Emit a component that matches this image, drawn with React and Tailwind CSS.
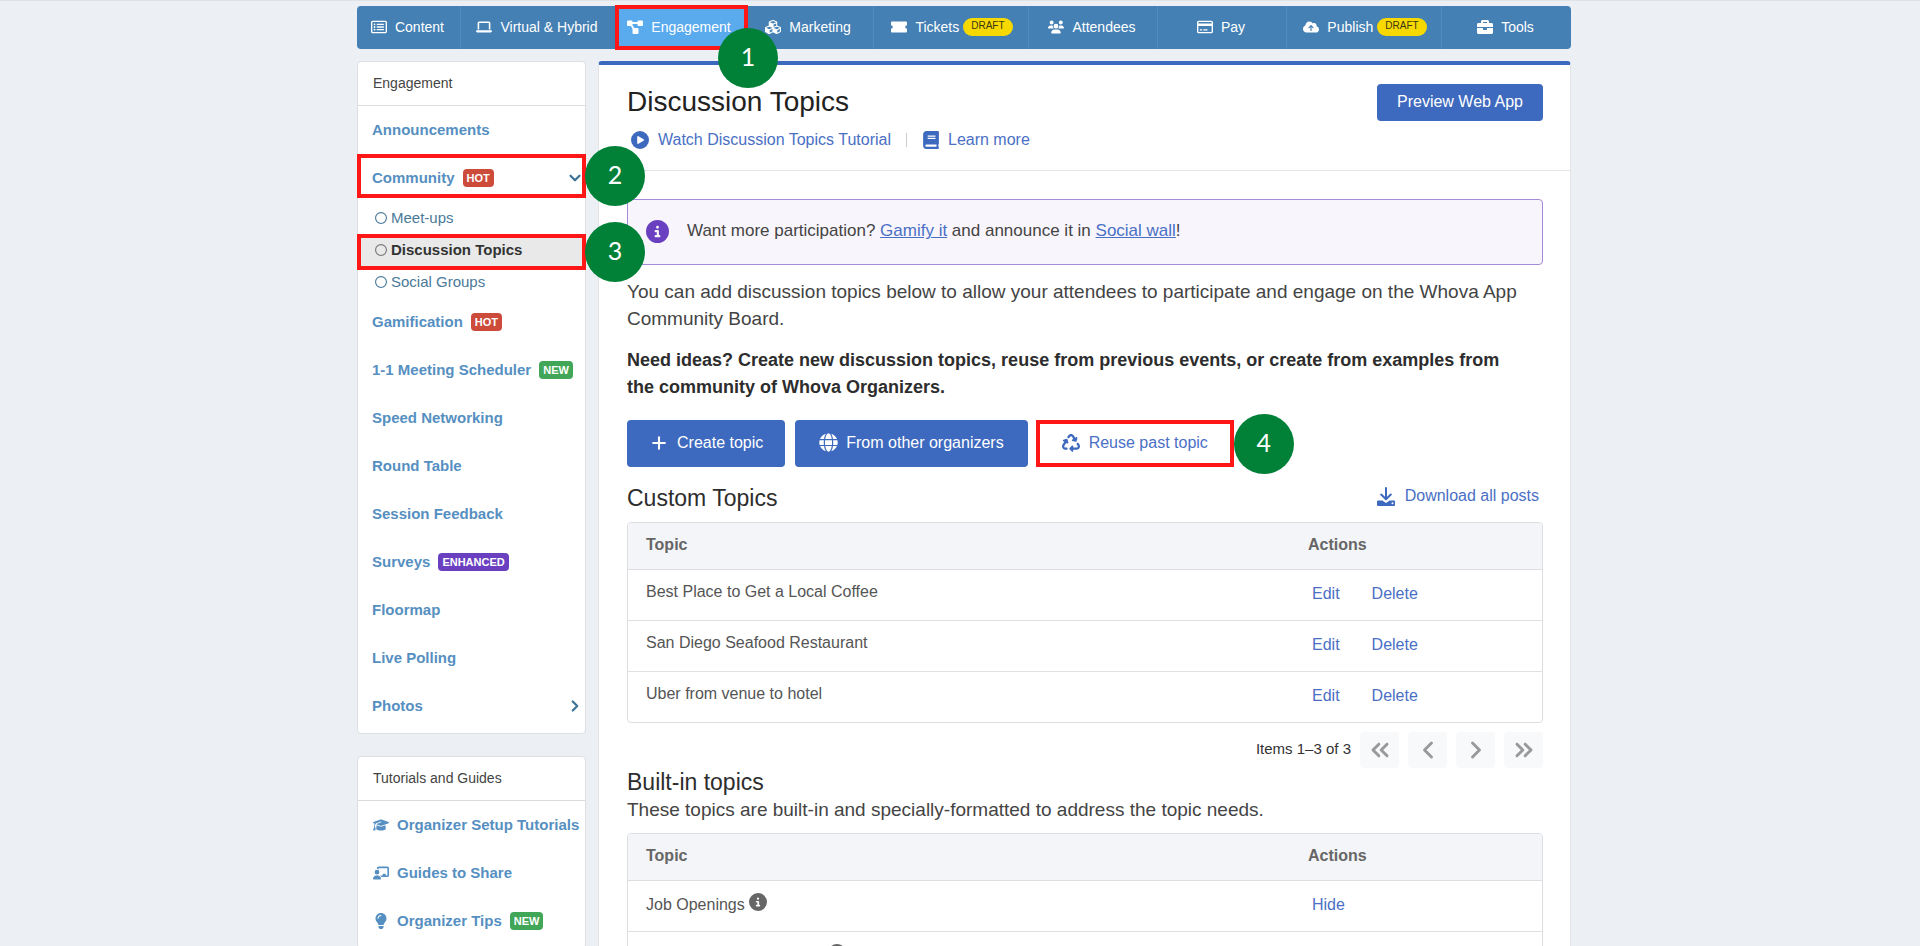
import React, { useState } from 'react';
import { ChevronDown, ChevronLeft, ChevronRight, ChevronsLeft, ChevronsRight, Plus } from 'lucide-react';
import { FaCubes, FaLightbulb, FaGlobe, FaBriefcase, FaBook } from 'react-icons/fa';
import {
  FaRegRectangleList,
  FaLaptop,
  FaUsers,
  FaRegCreditCard,
  FaCloudArrowUp,
  FaCirclePlay,
  FaCircleInfo,
  FaRecycle,
  FaGraduationCap,
  FaChalkboardUser,
  FaRegCircle,
} from 'react-icons/fa6';

const DiagramIcon = ({ className }) => (
  <svg viewBox="0 0 16 16" className={className} fill="currentColor" aria-hidden="true">
    <rect x="0" y="1.500" width="5.500" height="5.500" rx="1" />
    <rect x="10.500" y="1.500" width="5.500" height="5.500" rx="1" />
    <rect x="5.500" y="9" width="6" height="6" rx="1" />
    <path d="M4 4h8M3.500 5l4 6" fill="none" stroke="currentColor" strokeWidth="1.800" />
  </svg>
);

const TicketIcon = ({ className }) => (
  <svg viewBox="0 0 16 12" className={className} fill="currentColor" aria-hidden="true">
    <path d="M1 0.500h14a1 1 0 0 1 1 1v2.700a1.800 1.800 0 0 0 0 3.600v2.700a1 1 0 0 1-1 1H1a1 1 0 0 1-1-1V7.800a1.800 1.800 0 0 0 0-3.600V1.500a1 1 0 0 1 1-1z" />
  </svg>
);

const DownloadIcon = ({ className }) => (
  <svg viewBox="0 0 18 19" className={className} aria-hidden="true">
    <path d="M9 1v11M4.200 7.500L9 12.300l4.800-4.800" fill="none" stroke="currentColor" strokeWidth="2" strokeLinecap="round" strokeLinejoin="round" />
    <path d="M1 13.500h4.300L9 16l3.700-2.500H17a1 1 0 0 1 1 1V18a1 1 0 0 1-1 1H1a1 1 0 0 1-1-1v-3.500a1 1 0 0 1 1-1zm14.500 1.800a1 1 0 1 0 0 2 1 1 0 0 0 0-2z" fill="currentColor" fillRule="evenodd" />
  </svg>
);

const navItems = [
  { name: 'Content', icon: FaRegRectangleList },
  { name: 'Virtual & Hybrid', icon: FaLaptop },
  { name: 'Engagement', icon: DiagramIcon, step: 1 },
  { name: 'Marketing', icon: FaCubes },
  { name: 'Tickets', icon: TicketIcon, draft: true },
  { name: 'Attendees', icon: FaUsers },
  { name: 'Pay', icon: FaRegCreditCard },
  { name: 'Publish', icon: FaCloudArrowUp, draft: true },
  { name: 'Tools', icon: FaBriefcase },
];

const menuItems = [
  { name: 'Announcements' },
  {
    name: 'Community',
    badge: 'HOT',
    step: 2,
    children: ['Meet-ups', 'Discussion Topics', 'Social Groups'],
  },
  { name: 'Gamification', badge: 'HOT' },
  { name: '1-1 Meeting Scheduler', badge: 'NEW' },
  { name: 'Speed Networking' },
  { name: 'Round Table' },
  { name: 'Session Feedback' },
  { name: 'Surveys', badge: 'ENHANCED' },
  { name: 'Floormap' },
  { name: 'Live Polling' },
  { name: 'Photos', more: true },
];

const guideItems = [
  { name: 'Organizer Setup Tutorials', icon: FaGraduationCap },
  { name: 'Guides to Share', icon: FaChalkboardUser },
  { name: 'Organizer Tips', icon: FaLightbulb, badge: 'NEW' },
];

const customTopics = ['Best Place to Get a Local Coffee', 'San Diego Seafood Restaurant', 'Uber from venue to hotel'];

// the second built-in topic has no name yet, its row only holds the info icon
const builtInTopics = ['Job Openings', ''];

const badgeColors = {
  HOT: 'bg-[#cd4b3a]',
  NEW: 'bg-[#42a658]',
  ENHANCED: 'bg-[#6b40c0]',
};

const Badge = ({ label }) => (
  <span className={`ml-2 flex h-[18px] items-center rounded px-1 text-[11px] font-bold text-white ${badgeColors[label]}`}>
    {label}
  </span>
);

const Step = ({ number, className }) => (
  <span className={`absolute z-20 flex size-[60px] items-center justify-center rounded-full bg-[#018137] pb-0.5 font-['Lato',sans-serif] text-[25px] font-normal text-white ${className}`}>
    {number}
  </span>
);

const Outline = ({ className }) => (
  <span className={`pointer-events-none absolute z-10 border-4 border-[#ff1616] ${className}`} />
);

const NavBar = () => (
  <nav className="grid h-[43px] grid-cols-[104fr_155fr_129fr_129fr_155fr_129fr_129fr_155fr_129fr] rounded bg-[#4480b4] text-sm text-white">
    {navItems.map(({ name, icon: Icon, draft, step }) => (
      <div key={name} className="relative border-r border-[#4f8bc0] last:border-r-0">
        <a
          href="#"
          className={`flex h-full items-center justify-center whitespace-nowrap pb-0.5 ${draft ? 'pl-0.5' : 'pr-0.5'} ${step ? 'bg-[#5aaaee]' : ''}`}
        >
          <Icon className="mr-2 size-4" />
          {name}
          {draft && (
            <span className="ml-1 flex h-[18px] items-center rounded-full bg-[#f7d901] px-2 text-[10px] text-[#3a3618]">
              DRAFT
            </span>
          )}
        </a>
        {step && <Outline className="-left-px -right-1 -top-px -bottom-px" />}
        {step && <Step number={step} className="-right-[34px] top-[22px]" />}
      </div>
    ))}
  </nav>
);

const SideBar = () => {
  const [active, setActive] = useState('Discussion Topics');

  return (
    <aside className="w-[229px] shrink-0 space-y-[22px] text-[15px]">
      <section className="rounded border border-[#dedfe2] bg-white pb-[3px]">
        <h2 className="flex h-11 items-center border-b border-[#dcdcdc] px-[15px] pb-0.5 text-sm text-[#444]">Engagement</h2>
        <ul>
          {menuItems.map((item) => (
            <li key={item.name}>
              <div className="relative">
                <a href="#" className="flex h-12 items-center whitespace-nowrap pl-[14px] pr-px font-bold text-[#568fc1]">
                  {item.name}
                  {item.badge && <Badge label={item.badge} />}
                  {item.children && <ChevronDown className="ml-auto size-[18px] text-[#3d7396]" strokeWidth={3} />}
                  {item.more && <ChevronRight className="ml-auto size-[18px] text-[#3d7396]" strokeWidth={3} />}
                </a>
                {item.step && <Outline className="-inset-x-px top-0 bottom-1" />}
                {item.step && <Step number={item.step} className="-top-2 left-full" />}
              </div>
              {item.children && (
                <ul>
                  {item.children.map((child) => (
                    <li key={child} className="relative">
                      <a
                        href="#"
                        onClick={() => setActive(child)}
                        className={`flex h-8 items-center pl-[17px] ${
                          active === child ? 'bg-[#e9e9e9] font-bold text-[#333]' : 'text-[#4a7a99]'
                        }`}
                      >
                        <FaRegCircle className={`mr-1 size-3 ${active === child ? 'text-[#777]' : ''}`} />
                        {child}
                      </a>
                      {child === 'Discussion Topics' && <Outline className="-inset-x-px top-0 -bottom-1" />}
                      {child === 'Discussion Topics' && <Step number={3} className="-top-3 left-full" />}
                    </li>
                  ))}
                </ul>
              )}
            </li>
          ))}
        </ul>
      </section>

      <section className="rounded border border-[#dedfe2] bg-white pb-[3px]">
        <h2 className="flex h-11 items-center border-b border-[#dcdcdc] px-[15px] pb-0.5 text-sm text-[#444]">Tutorials and Guides</h2>
        <ul>
          {guideItems.map(({ name, icon: Icon, badge }) => (
            <li key={name}>
              <a href="#" className="flex h-12 items-center whitespace-nowrap pl-[14px] font-bold text-[#568fc1]">
                <span className="mr-[7px] flex w-[18px] justify-center">
                  <Icon className="h-4 w-auto" />
                </span>
                {name}
                {badge && <Badge label={badge} />}
              </a>
            </li>
          ))}
        </ul>
      </section>
    </aside>
  );
};

const TopicTable = ({ topics, builtIn }) => (
  <div className="overflow-hidden rounded border border-[#dcdee1]">
    <table className="w-full table-fixed text-left">
      <thead>
        <tr className="h-[46px] border-b border-[#dcdee1] bg-[#f4f5f8] text-[#666]">
          <th className="px-[18px] pb-1.5 pt-1">Topic</th>
          <th className="w-[252px] px-[18px] pb-1.5 pt-1">Actions</th>
        </tr>
      </thead>
      <tbody>
        {topics.map((topic) => (
          <tr key={topic} className="h-[51px] border-b border-[#dfe1e3] align-top last:border-b-0">
            <td className={`px-[18px] text-[#555] ${builtIn ? 'pt-3' : 'pt-[10px]'}`}>
              <span className="flex h-6 items-center">
                {topic || <span className="w-[178px]" />}
                {builtIn && <FaCircleInfo className="mb-1.5 ml-1 size-[18px] text-[#666]" />}
              </span>
            </td>
            <td className="px-[18px] pt-3 text-[#4a70c5]">
              <div className="flex gap-8 px-1">
                {builtIn && topic && <button>Hide</button>}
                {!builtIn && (
                  <>
                    <button>Edit</button>
                    <button>Delete</button>
                  </>
                )}
              </div>
            </td>
          </tr>
        ))}
      </tbody>
    </table>
  </div>
);

const pageButtons = [
  { label: 'First page', icon: ChevronsLeft },
  { label: 'Previous page', icon: ChevronLeft },
  { label: 'Next page', icon: ChevronRight },
  { label: 'Last page', icon: ChevronsRight },
];

const App = () => {
  return (
    <div className="h-screen overflow-hidden border-t border-[#dfe3e8] bg-[#ecf0f5] pl-2 pt-[5px] font-['Liberation_Sans',Arial,sans-serif]">
      <div className="mx-auto max-w-[1214px]">
        <NavBar />
        <div className="mt-3 flex items-start gap-3">
          <SideBar />
          <main className="min-w-0 flex-1 rounded border border-t-4 border-[#e2e4e8] border-t-[#3c69be] bg-white text-base">
            <header className="border-b border-[#e3e4e6] pb-[18px] pl-7 pr-[27px] pt-[19px]">
              <div className="flex h-[37px] items-center justify-between">
                <h1 className="pb-0.5 text-[28px] text-[#222]">Discussion Topics</h1>
                <button className="h-[37px] rounded bg-[#3d69be] px-5 pb-0.5 text-white">Preview Web App</button>
              </div>
              <div className="mt-[7px] flex h-6 items-center pl-1 text-[#4a70c5]">
                <a href="#" className="flex items-center">
                  <FaCirclePlay className="mr-[9px] size-[18px] text-[#3d69be]" />
                  Watch Discussion Topics Tutorial
                </a>
                <span className="mx-[15px] h-[14px] w-px bg-[#ccc]" />
                <a href="#" className="flex items-center">
                  <FaBook className="mr-2 size-[18px] text-[#3d69be]" />
                  Learn more
                </a>
              </div>
            </header>

            <div className="pb-8 pl-7 pr-[27px] pt-7">
              <div className="flex h-[66px] items-center rounded border border-[#a68cd8] bg-[#f8f5fc] pb-0.5 pl-[18px] text-[17px] text-[#444]">
                <FaCircleInfo className="mr-[18px] size-[23px] text-[#6b40c0]" />
                <p>
                  Want more participation? <a href="#" className="text-[#4a70c5] underline">Gamify it</a> and announce it in{' '}
                  <a href="#" className="text-[#4a70c5] underline">Social wall</a>!
                </p>
              </div>

              <p className="mt-[13px] text-[19px] leading-[27px] text-[#444]">
                You can add discussion topics below to allow your attendees to participate and engage on the Whova App Community Board.
              </p>
              <p className="mt-[15px] pr-5 text-lg font-bold leading-[27px] text-[#2d2d2d]">
                Need ideas? Create new discussion topics, reuse from previous events, or create from examples from the community of Whova Organizers.
              </p>

              <div className="mt-[19px] flex h-[47px] items-stretch">
                <button className="flex items-center rounded bg-[#3d69be] px-[22px] pb-0.5 text-white">
                  <Plus className="mr-2 size-5" strokeWidth={2.5} />
                  Create topic
                </button>
                <button className="ml-[10px] flex items-center rounded bg-[#3d69be] px-6 pb-0.5 text-white">
                  <FaGlobe className="mr-2 size-[19px]" />
                  From other organizers
                </button>
                <div className="relative ml-2 flex">
                  <button className="flex items-center px-[26px] pb-0.5 text-[#4a70c5]">
                    <FaRecycle className="mr-[9px] size-[18px] text-[#3d69be]" />
                    Reuse past topic
                  </button>
                  <Outline className="inset-0" />
                  <Step number={4} className="-top-[6px] left-full" />
                </div>
              </div>

              <div className="mb-2 mt-[15px] flex h-8 items-center justify-between">
                <h2 className="text-[23px] text-[#2d2d2d]">Custom Topics</h2>
                <a href="#" className="flex items-center pb-1 pr-1 text-[#4a70c5]">
                  <DownloadIcon className="mr-[10px] h-[19px] w-[18px] text-[#3d69be]" />
                  Download all posts
                </a>
              </div>
              <TopicTable topics={customTopics} />

              <div className="mt-[9px] flex h-9 items-center justify-end gap-[9px]">
                <span className="pb-0.5 text-[15px] text-[#333]">Items 1–3 of 3</span>
                {pageButtons.map(({ label, icon: Icon }) => (
                  <button key={label} aria-label={label} className="flex h-9 w-[39px] items-center justify-center rounded bg-[#f8f9fb] text-[#999]">
                    <Icon className="size-7" strokeWidth={2.5} />
                  </button>
                ))}
              </div>

              <h2 className="text-[23px] leading-7 text-[#2d2d2d]">Built-in topics</h2>
              <p className="mb-[10px] text-[19px] leading-[27px] text-[#444]">
                These topics are built-in and specially-formatted to address the topic needs.
              </p>
              <TopicTable topics={builtInTopics} builtIn />
            </div>
          </main>
        </div>
      </div>
    </div>
  );
};

export default App;
